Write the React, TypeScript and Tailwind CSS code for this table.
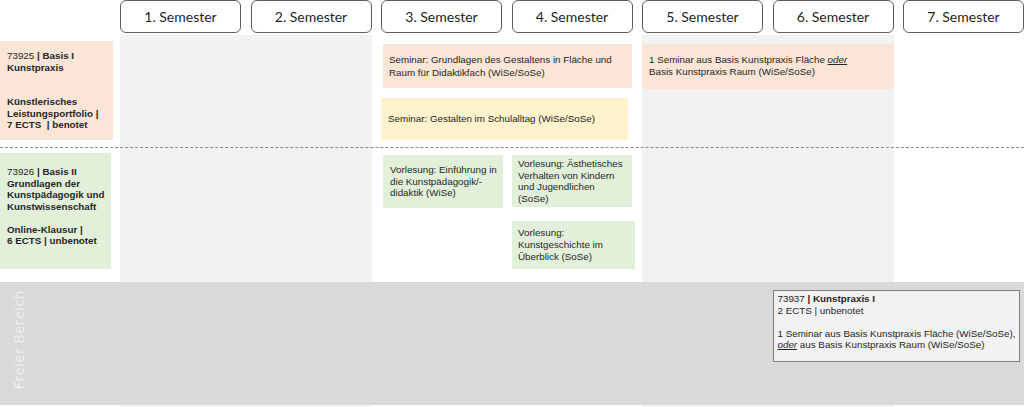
import React from "react";

const semCols = [
  "col-start-2",
  "col-start-3",
  "col-start-4",
  "col-start-5",
  "col-start-6",
  "col-start-7",
  "col-start-8",
];

const arial =
  "font-['Liberation_Sans',Arial,sans-serif] text-[9.8px] text-[#262626] whitespace-nowrap";

export default function App() {
  return (
    <div className="w-[1024px] h-[407px] bg-white overflow-hidden">
      <div className="grid grid-cols-[110.5px_repeat(7,121px)] grid-rows-[35px_112px_135px_125px] gap-x-[9.5px]">
        {/* Header buttons */}
        {semCols.map((c, i) => (
          <div
            key={c}
            className={`${c} row-start-1 h-[33px] rounded-[6px] border border-[#5e5e5e] bg-white flex items-center justify-center font-['Lato',sans-serif] text-[14px] text-[#1f1f1f]`}
          >
            {i + 1}. Semester
          </div>
        ))}

        {/* Gray lanes */}
        <div className="row-start-2 row-span-3 col-start-2 col-span-2 bg-[#f2f2f2]" />
        <div className="row-start-2 row-span-3 col-start-6 col-span-2 bg-[#f2f2f2]" />

        {/* Row Basis I */}
        <div
          className={`${arial} row-start-2 col-start-1 mt-[6px] w-[113px] h-[99px] bg-[#fbe5d6] flex flex-col justify-center pl-[7px] leading-[11.5px]`}
        >
          <div>
            73925 <b>| Basis I</b>
          </div>
          <div className="font-bold">Kunstpraxis</div>
          <div className="h-[23px]" />
          <div className="font-bold">Künstlerisches</div>
          <div className="font-bold">Leistungsportfolio |</div>
          <div className="font-bold">7 ECTS&nbsp; | benotet</div>
        </div>

        <div className="row-start-2 col-start-4 col-span-2 flex flex-col">
          <div
            className={`${arial} ml-[2px] mt-[9px] w-[249px] h-[44px] bg-[#fbe5d6] pl-[6px] pt-[9px] leading-[13px]`}
          >
            Seminar: Grundlagen des Gestaltens in Fläche und
            <br />
            Raum für Didaktikfach (WiSe/SoSe)
          </div>
          <div
            className={`${arial} mt-[10px] w-[247px] h-[42px] bg-[#fff2cc] pl-[7px] flex items-center leading-[12px]`}
          >
            Seminar: Gestalten im Schulalltag (WiSe/SoSe)
          </div>
        </div>

        <div
          className={`${arial} row-start-2 col-start-6 col-span-2 mt-[9px] h-[45px] bg-[#fbe5d6] pl-[7px] pt-[10px] leading-[12px]`}
        >
          1 Seminar aus Basis Kunstpraxis Fläche <span className="italic underline">oder</span>
          <br />
          Basis Kunstpraxis Raum (WiSe/SoSe)
        </div>

        {/* Dashed divider */}
        <div className="row-start-3 col-start-1 col-span-8 self-start h-0 border-t border-dashed border-[#8a8a8a]" />

        {/* Row Basis II */}
        <div
          className={`${arial} row-start-3 col-start-1 mt-[6px] w-[111px] h-[116px] bg-[#e2f0d9] pt-[13px] pl-[7px] leading-[11.5px]`}
        >
          <div>
            73926 <b>| Basis II</b>
          </div>
          <div className="font-bold">Grundlagen der</div>
          <div className="font-bold">Kunstpädagogik und</div>
          <div className="font-bold">Kunstwissenschaft</div>
          <div className="h-[11.5px]" />
          <div className="font-bold">Online-Klausur |</div>
          <div className="font-bold">6 ECTS | unbenotet</div>
        </div>

        <div
          className={`${arial} row-start-3 col-start-4 ml-[2px] mt-[8px] w-[120px] h-[53px] bg-[#e2f0d9] px-[7px] flex items-center leading-[11.5px]`}
        >
          <div>
            Vorlesung: Einführung in
            <br />
            die Kunstpädagogik/-
            <br />
            didaktik (WiSe)
          </div>
        </div>

        <div className="row-start-3 col-start-5 flex flex-col">
          <div
            className={`${arial} mt-[8px] ml-[0.5px] w-[120px] h-[52px] bg-[#e2f0d9] px-[6px] flex items-center leading-[11.5px]`}
          >
            <div>
              Vorlesung: Ästhetisches
              <br />
              Verhalten von Kindern
              <br />
              und Jugendlichen
              <br />
              (SoSe)
            </div>
          </div>
          <div
            className={`${arial} mt-[14px] ml-[0.5px] w-[123px] h-[48px] bg-[#e2f0d9] px-[6px] flex items-center leading-[12px]`}
          >
            <div>
              Vorlesung:
              <br />
              Kunstgeschichte im
              <br />
              Überblick (SoSe)
            </div>
          </div>
        </div>

        {/* Freier Bereich band */}
        <div className="row-start-4 col-start-1 col-span-8 h-[123px] bg-[#d9d9d9]" />
        <div className="row-start-4 col-start-1 h-[123px] w-[36px] flex items-center justify-center pb-[8px]">
          <span className="[writing-mode:vertical-rl] rotate-180 font-['Open_Sans',sans-serif] text-[14px] tracking-[0.6px] text-[#f0f0f0]">
            Freier Bereich
          </span>
        </div>

        <div
          className={`${arial} row-start-4 col-start-7 col-span-2 mt-[8px] w-[247px] h-[72px] border border-[#7f7f7f] bg-[#f2f2f2] pt-[2px] px-[4px] leading-[11.5px]`}
        >
          <div>
            73937 <b>| Kunstpraxis I</b>
          </div>
          <div>2 ECTS | unbenotet</div>
          <div className="h-[11.5px]" />
          <div>1 Seminar aus Basis Kunstpraxis Fläche (WiSe/SoSe),</div>
          <div>
            <span className="italic underline">oder</span> aus Basis Kunstpraxis Raum (WiSe/SoSe)
          </div>
        </div>
      </div>
    </div>
  );
}
